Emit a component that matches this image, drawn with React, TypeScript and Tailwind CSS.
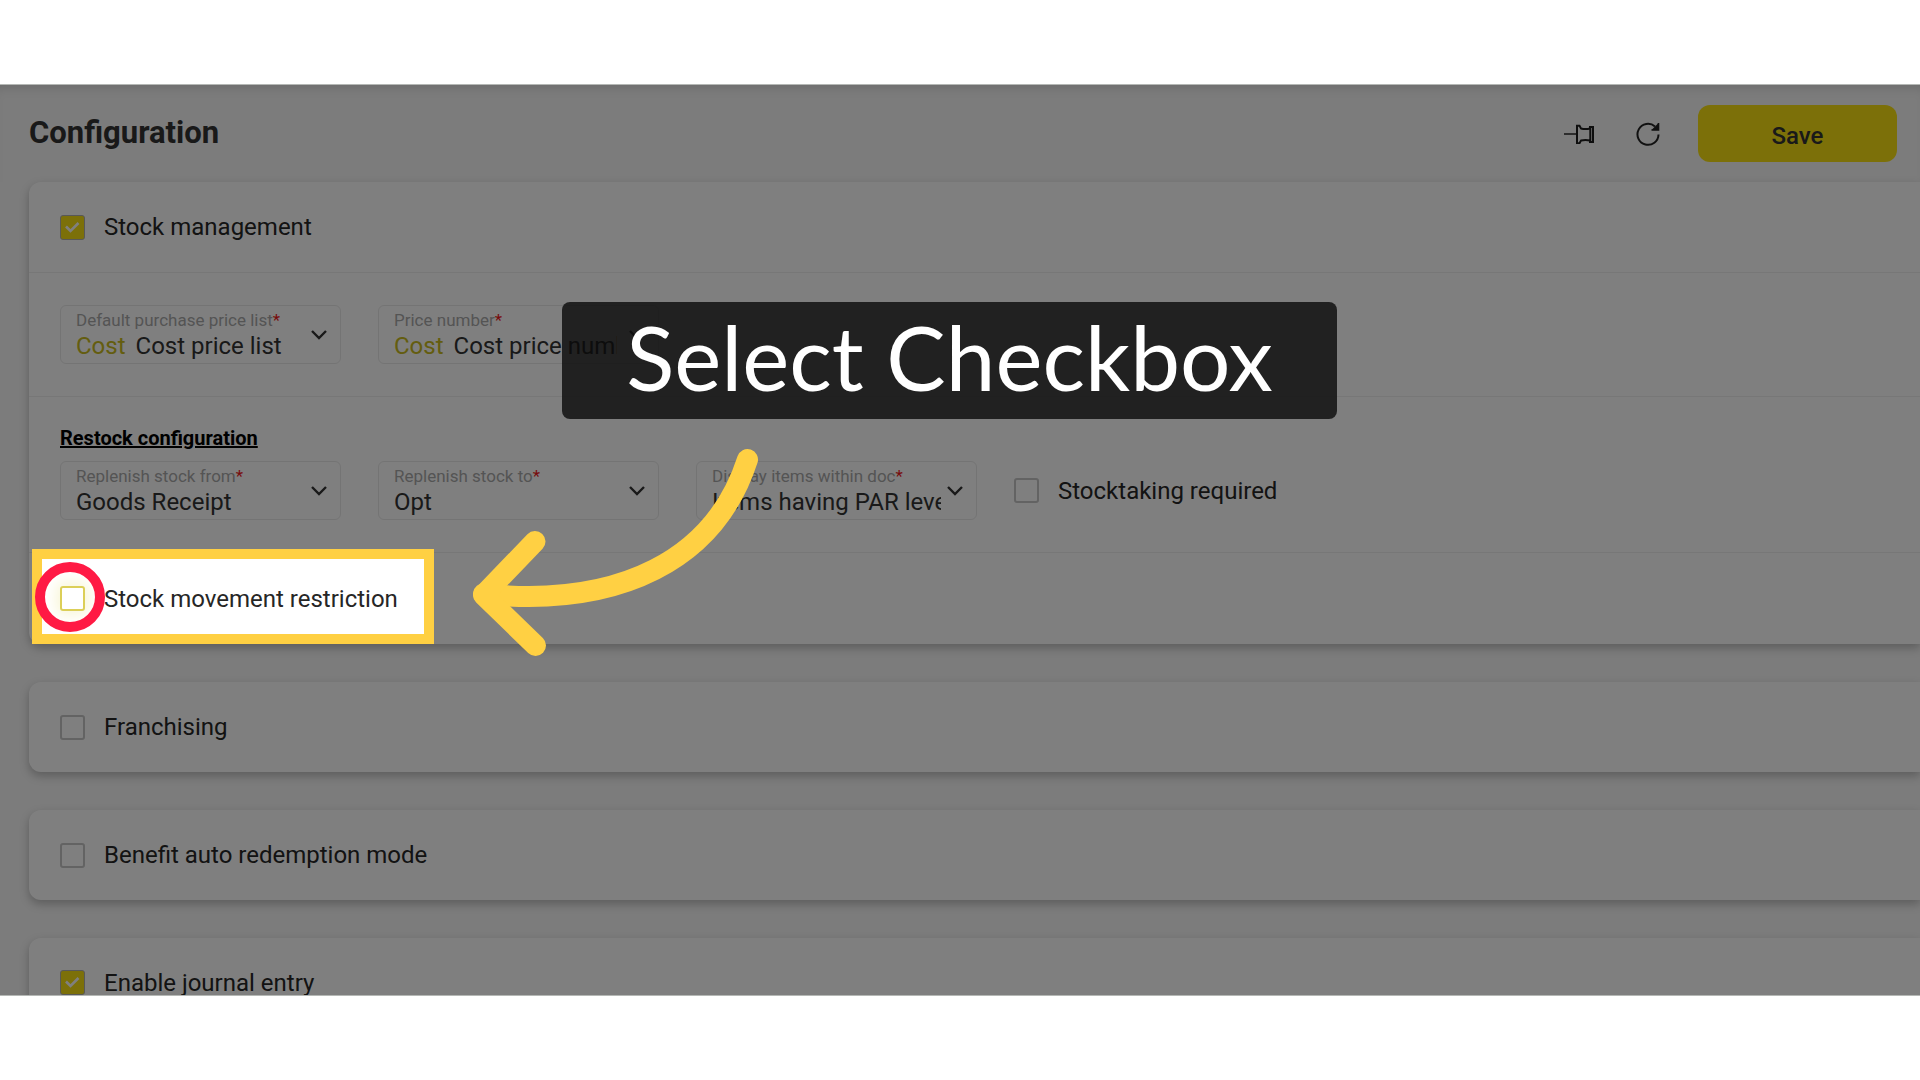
import type { ReactNode } from "react";

type FieldProps = {
  id: string;
  label: string;
  value: string;
  tag?: string;
};

type CheckProps = {
  label: string;
  checked?: boolean;
  focused?: boolean;
};

function Check({ label, checked = false, focused = false }: CheckProps) {
  return (
    <label className="flex items-center gap-[19px] text-2xl leading-6 text-[#262626] whitespace-nowrap">
      <span className="relative flex">
        <input
          type="checkbox"
          defaultChecked={checked}
          className={`size-[25px] appearance-none rounded-[3px] border-2 checked:border checked:bg-[#f8e112] ${
            focused
              ? "border-[#dccf58] shadow-[0_0_14px_4px_#f8f6d8]"
              : "border-[#c6c6c6] checked:border-[#b0b0b0]"
          }`}
        />
        {checked && (
          <svg viewBox="0 0 25 25" className="absolute inset-0" fill="none">
            <path d="M6 11.500l4.500 4.500 8-8" stroke="#fff" strokeWidth="2.600" />
          </svg>
        )}
      </span>
      {label}
    </label>
  );
}

function Field({ id, label, value, tag }: FieldProps) {
  return (
    <div
      className={`flex h-[59px] w-[281px] items-center rounded-md border border-[#e8e8e8] pr-[13px] pl-[15px] ${
        tag ? "gap-3" : "gap-1.5"
      }`}
    >
      <div className="flex min-w-0 flex-1 flex-col pb-0.5">
        <label
          htmlFor={id}
          className="text-[17px] leading-6 text-[#a9a9a9] whitespace-nowrap"
        >
          {label}
          <span className="text-[#f01818]">*</span>
        </label>
        <div className="flex gap-2.5 text-2xl leading-7">
          {tag && <span className="text-[#c8bb20]">{tag}</span>}
          <select
            id={id}
            className="min-w-0 flex-1 appearance-none overflow-hidden text-[#333]"
          >
            <option>{value}</option>
          </select>
        </div>
      </div>
      <svg viewBox="0 0 16 10" className="h-2.5 w-4" fill="none">
        <path d="M1 1l7 7 7-7" stroke="#333" strokeWidth="2.400" />
      </svg>
    </div>
  );
}

function Card({ children }: { children: ReactNode }) {
  return (
    <section className="rounded-l-xl bg-white shadow-[0_4px_10px_rgba(0,0,0,0.25)]">
      {children}
    </section>
  );
}

export default function App() {
  return (
    <div className="bg-white py-[84px] font-[Roboto,sans-serif]">
      <main className="relative overflow-hidden border-y border-[#b5b8b5] bg-[#f8f8f8]">
        <header className="flex h-[97px] items-center pr-[23px] pl-[29px] shadow-[inset_0_10px_12px_-8px_rgba(0,0,0,0.15)]">
          <h1 className="flex-1 text-[31px] font-bold text-[#333]">
            Configuration
          </h1>
          <button aria-label="Pin" className="mr-[42px]">
            <svg viewBox="0 0 30 20" className="h-5 w-[30px]" fill="none">
              <path d="M0 10h13" stroke="#333" strokeWidth="1.600" />
              <path
                d="M13 1.800h2.500l1.500 2.700c3 .8 6 .8 9 0V3h3v15h-3v-1.500c-3-.8-6-.8-9 0l-1.500 2.700H13zM26.300 4v13"
                stroke="#1c1c1c"
                strokeWidth="2"
              />
            </svg>
          </button>
          <button aria-label="Refresh" className="mr-[38px]">
            <svg viewBox="0 0 24 24" className="size-6" fill="none">
              <path
                d="M22.500 12.500A10.500 10.500 0 1 1 19 4.500"
                stroke="#222"
                strokeWidth="2"
              />
              <path d="M22.500 1v7h-7z" fill="#222" />
              <path d="M22.500 1v7h-7" stroke="#222" strokeWidth="1.600" />
            </svg>
          </button>
          <button className="h-[57px] w-[199px] rounded-xl bg-[#f8e112] pt-1 text-2xl font-medium text-[#333]">
            Save
          </button>
        </header>

        <div className="-mb-4 flex flex-col gap-[38px] pl-[29px]">
          <Card>
            <div className="flex h-[90px] items-center pl-[31px]">
              <Check label="Stock management" checked />
            </div>
            <div className="flex gap-[37px] border-t border-[#eee] py-8 pl-[31px]">
              <Field
                id="list"
                label="Default purchase price list"
                tag="Cost"
                value="Cost price list"
              />
              <Field
                id="number"
                label="Price number"
                tag="Cost"
                value="Cost price number"
              />
            </div>
            <div className="border-t border-[#eee] pt-[29px] pb-8 pl-[31px]">
              <h2 className="mb-[11px] text-xl leading-6 font-bold text-black underline">
                Restock configuration
              </h2>
              <div className="flex gap-[37px]">
                <Field
                  id="from"
                  label="Replenish stock from"
                  value="Goods Receipt"
                />
                <Field id="to" label="Replenish stock to" value="Opt" />
                <Field
                  id="display"
                  label="Display items within doc"
                  value="Items having PAR levels"
                />
                <Check label="Stocktaking required" />
              </div>
            </div>
            <div className="relative z-10 flex h-[92px] items-center border-t border-[#eee] pl-[31px]">
              <Check label="Stock movement restriction" focused />
              {/* everything outside this frame is dimmed */}
              <div className="pointer-events-none absolute -top-1 left-[3px] h-[95px] w-[402px] border-[10px] border-[#ffd043] shadow-[0_0_0_3000px_rgba(0,0,0,0.5)]">
                <div className="absolute top-[3px] -left-[7px] size-[70px] rounded-full border-[10px] border-[#ff1a44]" />
              </div>
            </div>
          </Card>
          <Card>
            <div className="flex h-[90px] items-center pl-[31px]">
              <Check label="Franchising" />
            </div>
          </Card>
          <Card>
            <div className="flex h-[90px] items-center pl-[31px]">
              <Check label="Benefit auto redemption mode" />
            </div>
          </Card>
          <Card>
            <div className="pt-8 pb-4 pl-[31px]">
              <Check label="Enable journal entry" checked />
            </div>
          </Card>
        </div>

        <div className="absolute top-[217px] left-[562px] z-20 flex h-[117px] w-[775px] items-center justify-center rounded-lg bg-[rgba(10,10,10,0.8)] pb-2 font-[Lato,sans-serif] text-[89px] leading-none text-white">
          Select Checkbox
        </div>
        <svg
          viewBox="460 440 310 225"
          className="pointer-events-none absolute top-[355px] left-[460px] z-20 h-[225px] w-[310px]"
          fill="none"
          stroke="#ffd043"
          strokeWidth="21"
          strokeLinecap="round"
          strokeLinejoin="round"
        >
          <path d="M747.500 459.500C715 560 620 608 483.500 594" />
          <path d="M535 541.500L483.500 595L535.500 645.500" />
        </svg>
      </main>
    </div>
  );
}
